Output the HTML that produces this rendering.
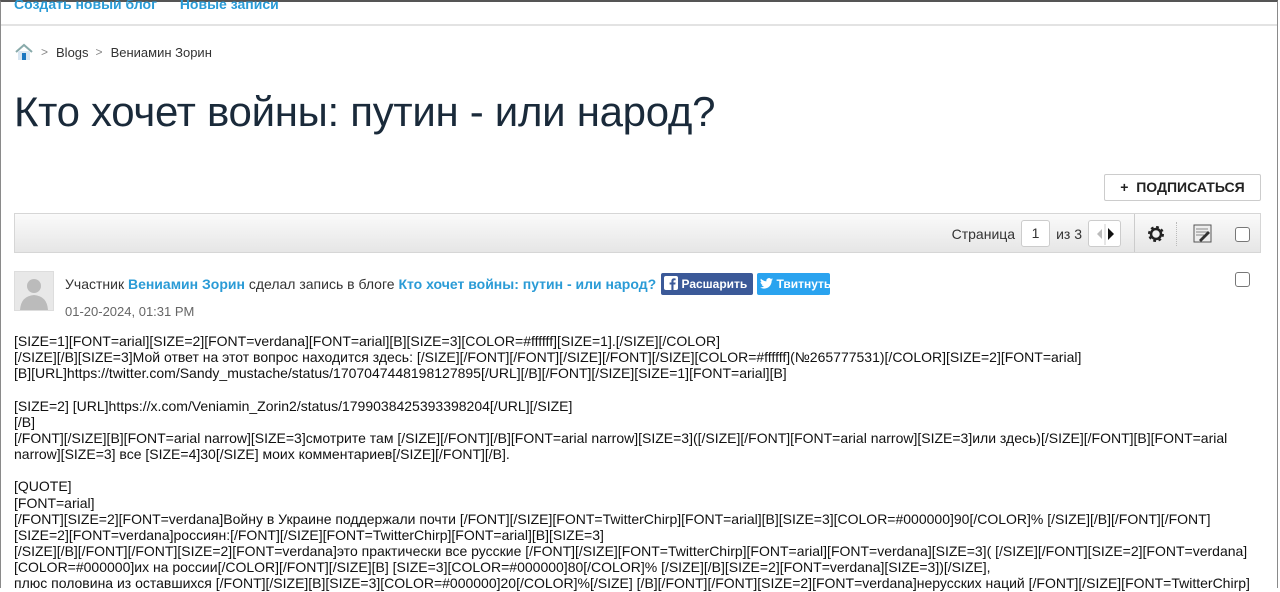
<!DOCTYPE html>
<html><head><meta charset="utf-8"><style>
*{margin:0;padding:0;box-sizing:border-box}
body{width:1280px;height:588px;overflow:hidden;background:#fff;font-family:"Liberation Sans",Arial,sans-serif;color:#2d2d2d;position:relative}
.frame{position:absolute;left:0;top:0;width:1278px;height:588px;border-left:1px solid #8a8a8a;border-right:1px solid #8a8a8a;border-top:2px solid #555}
.nav{position:absolute;top:-4px;left:14px;font-size:14px;font-weight:bold;color:#2a9bd6}
.nav span{margin-right:19px}
.hr{position:absolute;top:24px;left:1px;width:1276px;height:2px;background:#e3e3e3}
.crumb{position:absolute;top:43px;left:14px;font-size:13px;color:#333;display:flex;align-items:center}
.crumb .sep{color:#888;margin:0 8px 0 7px;font-size:12px}
h1{position:absolute;top:88px;left:14px;font-size:42px;font-weight:normal;color:#1a2a3a;letter-spacing:-0.3px}
.sub{position:absolute;left:1104px;top:174px;width:157px;height:27px;border:1px solid #ccc;border-radius:2px;font-size:14px;font-weight:bold;color:#222;text-align:center;line-height:25px}
.bar{position:absolute;left:14px;top:213px;width:1247px;height:40px;background:linear-gradient(#fafafa,#e6e6e6);border:1px solid #d6d6d6}
.bar .pg{position:absolute;right:139px;top:6px;font-size:14px;color:#333;display:flex;align-items:center}
.inp{display:inline-block;width:29px;height:27px;border:1px solid #ccc;border-radius:3px;background:#fff;text-align:center;line-height:25px;margin:0 6px}
.arr{display:inline-block;width:33px;height:27px;border:1px solid #ccc;border-radius:3px;background:#fff;margin-left:6px;position:relative}
.cb{position:absolute;width:15px;height:15px;border:1px solid #777;border-radius:3px;background:#fff}
.av{position:absolute;left:14px;top:271px;width:40px;height:40px;background:#e8e8e8;border:1px solid #ddd}
.meta{position:absolute;left:65px;top:273px;font-size:14px;color:#333;display:flex;align-items:center;white-space:nowrap}
.meta b{color:#2a9bd6}
.btn{display:inline-block;height:22px;line-height:22px;color:#fff;font-size:12px;font-weight:bold;border-radius:2px;padding:0 3px;white-space:nowrap;overflow:hidden}
.date{position:absolute;left:65px;top:304px;font-size:13px;color:#666}
.body{position:absolute;left:14px;top:333px;font-size:14px;line-height:16.15px;color:#111;width:1255px}
</style></head><body>
<div class="frame"></div>
<div class="nav"><span>Создать новый блог</span> <span>Новые записи</span></div>
<div class="hr"></div>
<div class="crumb"><svg width="20" height="18" viewBox="0 0 20 18"><path d="M2 9 L10 2 L18 9" fill="none" stroke="#8aa" stroke-width="2"/><rect x="4" y="8" width="12" height="9" fill="#d8e6f2"/><rect x="8" y="10" width="4" height="7" fill="#1a76c0"/></svg><span class="sep">&gt;</span>Blogs<span class="sep">&gt;</span>Вениамин Зорин</div>
<h1>Кто хочет войны: путин - или народ?</h1>
<div class="sub">+&nbsp; ПОДПИСАТЬСЯ</div>
<div class="bar">
<div class="pg">Страница <span class="inp">1</span> из 3 <span class="arr"><svg width="33" height="27" style="position:absolute;left:0;top:0"><path d="M13 8 L8 13 L13 18Z" fill="#bbb"/><line x1="16" y1="3" x2="16" y2="24" stroke="#ccc"/><path d="M19 7 L25 13 L19 19Z" fill="#111"/></svg></span></div>
<div style="position:absolute;left:1119px;top:0;width:1px;height:38px;background:#ccc"></div>
<svg style="position:absolute;left:1132px;top:11px" width="18" height="18" viewBox="0 0 18 18"><circle cx="9" cy="9" r="6" fill="none" stroke="#222" stroke-width="4" stroke-dasharray="2.4 2.3"/><circle cx="9" cy="9" r="5" fill="none" stroke="#222" stroke-width="2.5"/></svg>
<div style="position:absolute;left:1161px;top:8px;width:1px;height:24px;border-left:1px dotted #bbb"></div>
<svg style="position:absolute;left:1178px;top:10px" width="20" height="20"><rect x="1" y="1" width="17" height="17" fill="#eee" stroke="#555"/><path d="M3 5h12M3 8h12M3 11h8" stroke="#888"/><path d="M6 16 L15 7 L17 9 L8 18Z" fill="#333"/></svg>
</div>
<div class="cb" style="left:1235px;top:227px"></div>
<div class="cb" style="left:1235px;top:272px"></div>
<div class="av"><svg width="38" height="38"><circle cx="19" cy="14" r="7" fill="#bbb"/><path d="M5 38 Q6 24 19 23 Q32 24 33 38Z" fill="#bbb"/></svg></div>
<div class="meta">Участник&nbsp;<b>Вениамин Зорин</b>&nbsp;сделал запись в блоге&nbsp;<b>Кто хочет войны: путин - или народ?</b><span class="btn" style="background:#3b5998;margin-left:5px;width:92px"><svg width="14" height="14" style="vertical-align:-2px"><rect width="14" height="14" rx="2" fill="#fff"/><path d="M9.5 14V8.5h1.8l.3-2H9.5V5.3c0-.6.2-1 1-1h1.1V2.5c-.2 0-.8-.1-1.6-.1-1.6 0-2.6 1-2.6 2.7v1.4H5.6v2h1.8V14Z" fill="#3b5998"/></svg> Расшарить</span><span class="btn" style="background:#2aa3ef;margin-left:4px;width:73px"><svg width="13" height="11" style="vertical-align:-1px" viewBox="0 0 24 20"><path d="M24 2.4a10 10 0 0 1-2.8.8A5 5 0 0 0 23.3.4a10 10 0 0 1-3.1 1.2A4.9 4.9 0 0 0 11.8 6 14 14 0 0 1 1.7.9a4.9 4.9 0 0 0 1.5 6.6A4.9 4.9 0 0 1 1 6.9a4.9 4.9 0 0 0 3.9 4.8 5 5 0 0 1-2.2.1 4.9 4.9 0 0 0 4.6 3.4A9.9 9.9 0 0 1 0 17.2 14 14 0 0 0 7.5 19.4c9.1 0 14-7.5 14-14v-.6A10 10 0 0 0 24 2.4Z" fill="#fff"/></svg> Твитнуть</span></div>
<div class="date">01-20-2024, 01:31 PM</div>
<div class="body">[SIZE=1][FONT=arial][SIZE=2][FONT=verdana][FONT=arial][B][SIZE=3][COLOR=#ffffff][SIZE=1].[/SIZE][/COLOR]<br>[/SIZE][/B][SIZE=3]Мой ответ на этот вопрос находится здесь: [/SIZE][/FONT][/FONT][/SIZE][/FONT][/SIZE][COLOR=#ffffff](№265777531)[/COLOR][SIZE=2][FONT=arial]<br>[B][URL]https://twitter.com/Sandy_mustache/status/1707047448198127895[/URL][/B][/FONT][/SIZE][SIZE=1][FONT=arial][B]<br><br>[SIZE=2] [URL]https://x.com/Veniamin_Zorin2/status/1799038425393398204[/URL][/SIZE]<br>[/B]<br>[/FONT][/SIZE][B][FONT=arial narrow][SIZE=3]смотрите там [/SIZE][/FONT][/B][FONT=arial narrow][SIZE=3]([/SIZE][/FONT][FONT=arial narrow][SIZE=3]или здесь)[/SIZE][/FONT][B][FONT=arial<br>narrow][SIZE=3] все [SIZE=4]30[/SIZE] моих комментариев[/SIZE][/FONT][/B].<br><br>[QUOTE]<br>[FONT=arial]<br>[/FONT][SIZE=2][FONT=verdana]Войну в Украине поддержали почти [/FONT][/SIZE][FONT=TwitterChirp][FONT=arial][B][SIZE=3][COLOR=#000000]90[/COLOR]% [/SIZE][/B][/FONT][/FONT]<br>[SIZE=2][FONT=verdana]россиян:[/FONT][/SIZE][FONT=TwitterChirp][FONT=arial][B][SIZE=3]<br>[/SIZE][/B][/FONT][/FONT][SIZE=2][FONT=verdana]это практически все русские [/FONT][/SIZE][FONT=TwitterChirp][FONT=arial][FONT=verdana][SIZE=3]( [/SIZE][/FONT][SIZE=2][FONT=verdana]<br>[COLOR=#000000]их на россии[/COLOR][/FONT][/SIZE][B] [SIZE=3][COLOR=#000000]80[/COLOR]% [/SIZE][/B][SIZE=2][FONT=verdana][SIZE=3])[/SIZE],<br>плюс половина из оставшихся [/FONT][/SIZE][B][SIZE=3][COLOR=#000000]20[/COLOR]%[/SIZE] [/B][/FONT][/FONT][SIZE=2][FONT=verdana]нерусских наций [/FONT][/SIZE][FONT=TwitterChirp]</div>
</body></html>
